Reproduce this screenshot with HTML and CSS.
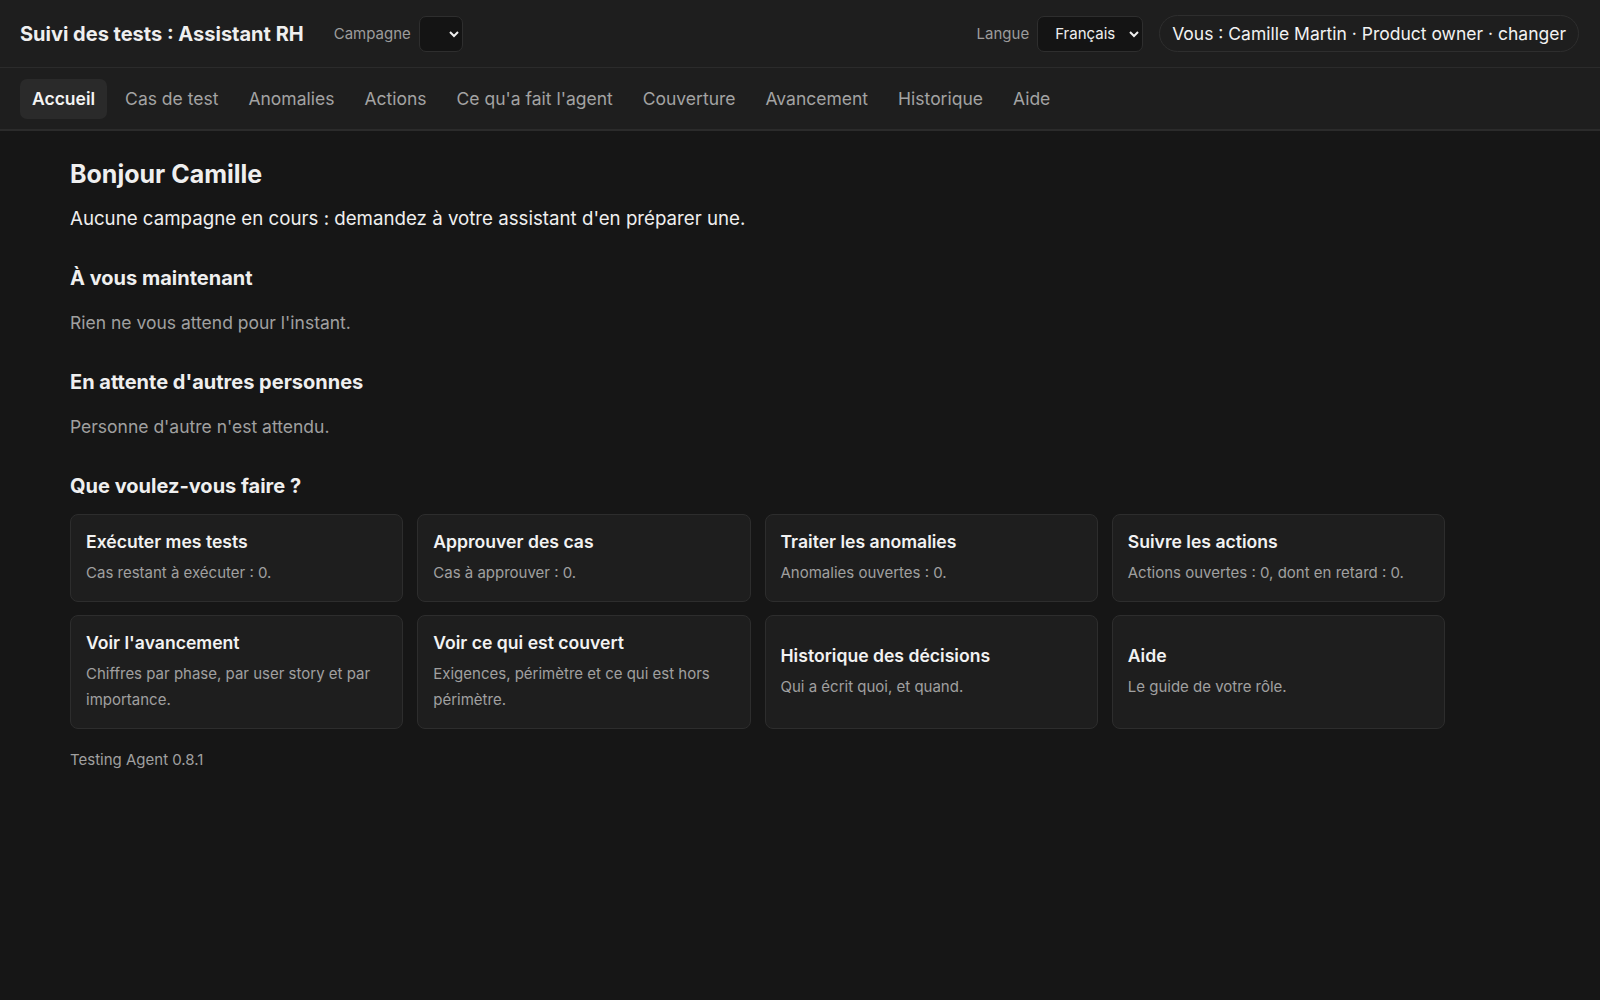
FILE: index.html
```html
<!DOCTYPE html>
<html lang="fr">
<head>
    <meta charset="UTF-8">
    <meta name="viewport" content="width=device-width, initial-scale=1.0">
    <title>Suivi des tests : Assistant RH</title>
    <link rel="stylesheet" href="styles.css">
</head>
<body>

    <header class="topbar">
        <div class="brand">Suivi des tests : Assistant RH</div>
        <label class="field-label" for="campagne">Campagne</label>
        <select id="campagne" class="select select-campagne">
            <option value=""></option>
        </select>

        <div class="topbar-right">
            <label class="field-label" for="langue">Langue</label>
            <select id="langue" class="select select-langue">
                <option value="fr" selected>Français</option>
                <option value="en">English</option>
            </select>
            <div class="user-pill">Vous : Camille Martin · Product owner · changer</div>
        </div>
    </header>

    <nav class="tabs">
        <a class="tab active" href="#">Accueil</a>
        <a class="tab" href="#">Cas de test</a>
        <a class="tab" href="#">Anomalies</a>
        <a class="tab" href="#">Actions</a>
        <a class="tab" href="#">Ce qu'a fait l'agent</a>
        <a class="tab" href="#">Couverture</a>
        <a class="tab" href="#">Avancement</a>
        <a class="tab" href="#">Historique</a>
        <a class="tab" href="#">Aide</a>
    </nav>

    <main class="content">
        <h1>Bonjour Camille</h1>
        <p class="intro">Aucune campagne en cours : demandez à votre assistant d'en préparer une.</p>

        <section class="block">
            <h2>À vous maintenant</h2>
            <p class="muted">Rien ne vous attend pour l'instant.</p>
        </section>

        <section class="block">
            <h2>En attente d'autres personnes</h2>
            <p class="muted">Personne d'autre n'est attendu.</p>
        </section>

        <section class="block">
            <h2 class="cards-title">Que voulez-vous faire ?</h2>
            <div class="cards">
                <a class="card" href="#">
                    <strong>Exécuter mes tests</strong>
                    <span>Cas restant à exécuter : 0.</span>
                </a>
                <a class="card" href="#">
                    <strong>Approuver des cas</strong>
                    <span>Cas à approuver : 0.</span>
                </a>
                <a class="card" href="#">
                    <strong>Traiter les anomalies</strong>
                    <span>Anomalies ouvertes : 0.</span>
                </a>
                <a class="card" href="#">
                    <strong>Suivre les actions</strong>
                    <span>Actions ouvertes : 0, dont en retard : 0.</span>
                </a>
                <a class="card" href="#">
                    <strong>Voir l'avancement</strong>
                    <span>Chiffres par phase, par user story et par importance.</span>
                </a>
                <a class="card" href="#">
                    <strong>Voir ce qui est couvert</strong>
                    <span>Exigences, périmètre et ce qui est hors périmètre.</span>
                </a>
                <a class="card" href="#">
                    <strong>Historique des décisions</strong>
                    <span>Qui a écrit quoi, et quand.</span>
                </a>
                <a class="card" href="#">
                    <strong>Aide</strong>
                    <span>Le guide de votre rôle.</span>
                </a>
            </div>
        </section>

        <footer class="version">Testing Agent 0.8.1</footer>
    </main>

</body>
</html>
```

FILE: styles.css
```css
:root {
    color-scheme: dark;
}

body {
    font-family: Inter, 'Noto Sans', sans-serif;
    margin: 0;
    background-color: #161616;
    color: #efefef;
}

.topbar {
    display: flex;
    align-items: center;
    height: 67px;
    padding: 0 21px 0 20px;
    background: #1e1e1e;
    border-bottom: 1px solid #2b2b2b;
}

.brand {
    font-size: 20px;
    font-weight: 700;
    margin-right: 30px;
}

.field-label {
    font-size: 15px;
    color: #9c9c9c;
    margin-right: 8px;
}

.select {
    height: 36px;
    background: #141414;
    color: #efefef;
    border: 1px solid #2e2e2e;
    border-radius: 7px;
    font-family: inherit;
    font-size: 15px;
}

.select-campagne {
    width: 44px;
    padding: 0 4px;
}

.select-langue {
    width: 106px;
    padding: 0 6px 0 13px;
}

.topbar-right {
    display: flex;
    align-items: center;
    margin-left: auto;
}

.user-pill {
    margin-left: 16px;
    padding: 0 12px;
    height: 35px;
    line-height: 35px;
    border: 1px solid #2e2e2e;
    border-radius: 20px;
    font-size: 17.5px;
    color: #f2f2f2;
}

.tabs {
    display: flex;
    align-items: center;
    gap: 6px;
    padding: 11px 20px 10px;
    background: #1e1e1e;
    border-bottom: 2px solid #2b2b2b;
}

.tab {
    padding: 0 12px;
    height: 40px;
    line-height: 40px;
    border-radius: 7px;
    font-size: 17.5px;
    color: #a3a3a3;
    text-decoration: none;
}

.tab.active {
    background: #2a2a2a;
    color: #f4f4f4;
    font-weight: 600;
}

.content {
    padding: 28px 70px 40px;
}

h1 {
    margin: 0 0 16px;
    font-size: 25px;
    line-height: 30px;
    font-weight: 700;
}

.intro {
    margin: 0;
    font-size: 18.7px;
    line-height: 27px;
}

.block {
    margin-top: 33px;
}

h2 {
    margin: 0 0 19px;
    font-size: 20px;
    line-height: 26px;
    font-weight: 700;
}

h2.cards-title {
    margin-bottom: 15px;
}

.muted {
    margin: 0;
    font-size: 17.5px;
    line-height: 26px;
    color: #a0a0a0;
}

.cards {
    display: grid;
    grid-template-columns: repeat(4, 1fr);
    gap: 13px 14px;
    max-width: 1375px;
}

.card {
    display: flex;
    flex-direction: column;
    justify-content: center;
    padding: 15px;
    background: #1e1e1e;
    border: 1px solid #2d2d2d;
    border-radius: 8px;
    color: #f2f2f2;
    text-decoration: none;
}

.card strong {
    font-size: 17.6px;
    line-height: 23px;
    font-weight: 600;
}

.card span {
    margin-top: 7px;
    font-size: 15px;
    line-height: 26px;
    color: #a0a0a0;
}

.version {
    margin-top: 20px;
    font-size: 15px;
    line-height: 22px;
    color: #a0a0a0;
}
```
